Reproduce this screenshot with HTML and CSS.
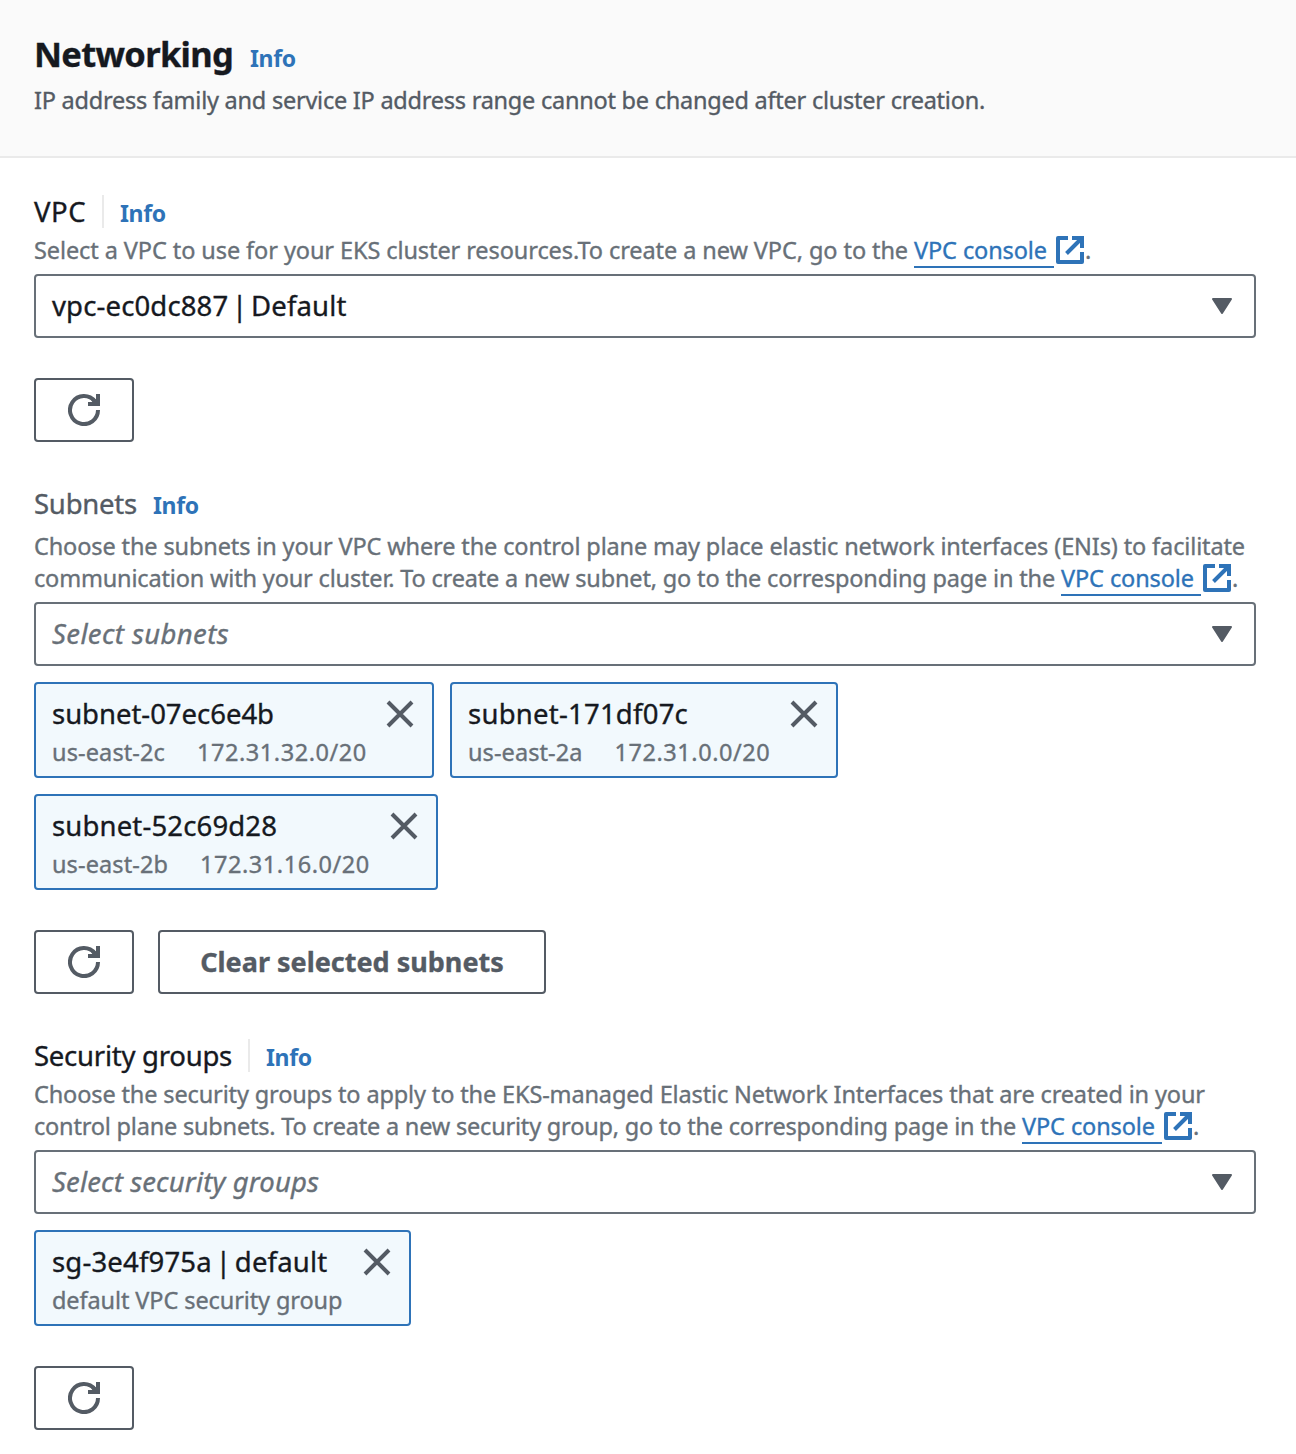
FILE: index.html
```html
<!DOCTYPE html>
<html lang="en">
<head>
<meta charset="utf-8">
<title>Networking</title>
<link rel="stylesheet" href="styles.css">
</head>
<body>
<svg class="sprite" aria-hidden="true">
  <symbol id="refresh" viewBox="0 0 32 32"><path d="M30 16A14 14 0 1 1 27 7.4"/><path d="M30 0V10H20M24.5 5L29 9.5"/></symbol>
  <symbol id="external" viewBox="0 0 28 28"><path stroke-linejoin="round" d="M12 2H2V26H26V16"/><path d="M16 2H26V12M25 3L10.5 17.5"/></symbol>
  <symbol id="close" viewBox="0 0 28 28"><path d="M2 2L26 26M26 2L2 26"/></symbol>
  <symbol id="caret" viewBox="0 0 20 16"><path d="M1 1H19L10 15Z"/></symbol>
</svg>
<header class="panel-header">
  <div class="title-row"><h2 class="title">Networking</h2><a class="info">Info</a></div>
  <p class="subtitle">IP address family and service IP address range cannot be changed after cluster creation.</p>
</header>
<main class="panel-body">
  <section class="field vpc">
    <div class="label-row"><h3 class="label divided">VPC</h3><a class="info">Info</a></div>
    <div class="hint"><div class="line"><span class="first">Select a VPC to use for your EKS cluster resources.To create a new VPC, go to the</span><a class="link">VPC console</a><svg class="external"><use href="#external"/></svg>.</div></div>
    <div class="select"><span class="value">vpc-ec0dc887 | Default</span><svg class="caret"><use href="#caret"/></svg></div>
    <div class="actions"><button class="button icon-only" aria-label="Refresh"><svg class="refresh"><use href="#refresh"/></svg></button></div>
  </section>
  <section class="field subnets">
    <div class="label-row"><h3 class="label muted">Subnets</h3><a class="info">Info</a></div>
    <div class="hint"><div class="line"><span class="first">Choose the subnets in your VPC where the control plane may place elastic network interfaces (ENIs) to facilitate</span></div><div class="line"><span class="second">communication with your cluster. To create a new subnet, go to the corresponding page in the</span><a class="link">VPC console</a><svg class="external"><use href="#external"/></svg>.</div></div>
    <div class="select placeholder"><span class="value">Select subnets</span><svg class="caret"><use href="#caret"/></svg></div>
    <div class="tokens">
      <div class="token zone-c"><div class="name">subnet-07ec6e4b</div><div class="meta"><span class="zone">us-east-2c</span><span class="cidr">172.31.32.0/20</span></div><svg class="close"><use href="#close"/></svg></div>
      <div class="token zone-a"><div class="name">subnet-171df07c</div><div class="meta"><span class="zone">us-east-2a</span><span class="cidr">172.31.0.0/20</span></div><svg class="close"><use href="#close"/></svg></div>
      <div class="token zone-b"><div class="name">subnet-52c69d28</div><div class="meta"><span class="zone">us-east-2b</span><span class="cidr">172.31.16.0/20</span></div><svg class="close"><use href="#close"/></svg></div>
    </div>
    <div class="actions"><button class="button icon-only" aria-label="Refresh"><svg class="refresh"><use href="#refresh"/></svg></button><button class="button clear">Clear selected subnets</button></div>
  </section>
  <section class="field groups">
    <div class="label-row"><h3 class="label divided">Security groups</h3><a class="info">Info</a></div>
    <div class="hint"><div class="line"><span class="first">Choose the security groups to apply to the EKS-managed Elastic Network Interfaces that are created in your</span></div><div class="line"><span class="second">control plane subnets. To create a new security group, go to the corresponding page in the</span><a class="link">VPC console</a><svg class="external"><use href="#external"/></svg>.</div></div>
    <div class="select placeholder"><span class="value">Select security groups</span><svg class="caret"><use href="#caret"/></svg></div>
    <div class="tokens">
      <div class="token group"><div class="name">sg-3e4f975a | default</div><div class="meta">default VPC security group</div><svg class="close"><use href="#close"/></svg></div>
    </div>
    <div class="actions"><button class="button icon-only" aria-label="Refresh"><svg class="refresh"><use href="#refresh"/></svg></button></div>
  </section>
</main>
</body>
</html>
```
FILE: styles.css
```css
* { box-sizing: border-box; }
body { margin: 0; background: #fff; color: #16191f; font: 23.5px/32px "Noto Sans", "Open Sans", sans-serif; -webkit-text-stroke: 0.35px; }
h2, h3, p { margin: 0; font-weight: 400; }
svg { display: block; flex: none; fill: none; stroke: #545b64; stroke-width: 4; }
.sprite { position: absolute; width: 0; height: 0; }

.panel-header { height: 158px; padding: 30px 34px 0; background: #fafafa; border-bottom: 2px solid #eaeaea; }
.title-row { display: flex; height: 45px; gap: 17px; align-items: baseline; }
.title { width: 199px; font-size: 34.5px; line-height: 47px; font-weight: 700; letter-spacing: -0.7px; white-space: nowrap; }
.subtitle { margin-top: 10px; color: #545b64; line-height: 30px; letter-spacing: -0.242px; white-space: nowrap; }
.info { color: #2e73b8; font-size: 23px; font-weight: 700; letter-spacing: -0.35px; -webkit-text-stroke: 0; }

.panel-body { display: flex; flex-direction: column; padding: 37px 40px 24px 34px; }
.field + .field { margin-top: 45px; }
.label-row { display: flex; height: 33px; gap: 16px; align-items: baseline; line-height: 33px; }
.label { font-size: 27.5px; line-height: 33px; white-space: nowrap; }
.divided { padding-right: 16px; border-right: 2px solid #eaeaea; }
.muted { color: #545b64; }
.vpc .label { width: 70px; letter-spacing: 0.5px; }
.subnets .label-row { height: 34px; }
.subnets .label { width: 103px; letter-spacing: -0.23px; }
.groups .label { width: 216px; letter-spacing: -0.25px; }

.hint { margin: 7px 0; color: #687078; }
.subnets .hint { margin-top: 10px; }
.line { display: flex; height: 32px; line-height: 30px; white-space: nowrap; }
.vpc .first { width: 874px; letter-spacing: -0.088px; }
.subnets .first { letter-spacing: -0.127px; }
.subnets .second { width: 1021px; letter-spacing: -0.169px; }
.groups .first { letter-spacing: -0.137px; }
.groups .second { width: 982px; letter-spacing: -0.196px; }
.link { width: 140px; height: 33px; margin-left: 6px; color: #2e73b8; letter-spacing: -0.1px; border-bottom: 2px solid #2e73b8; }
.external { width: 28px; height: 28px; margin: 1px 1px 0 2px; stroke: #2e73b8; }

.select { display: flex; align-items: center; justify-content: space-between; height: 64px; padding: 0 22px 0 16px; border: 2px solid #687078; border-radius: 4px; font-size: 27.5px; }
.vpc .value { letter-spacing: 0.14px; word-spacing: -3.6px; }
.subnets .value { letter-spacing: 0.39px; }
.groups .value { letter-spacing: 0.15px; }
.placeholder { color: #687078; font-style: italic; }
.caret { width: 20px; height: 16px; fill: #545b64; stroke-width: 2; stroke-linejoin: round; }

.actions { display: flex; gap: 24px; margin-top: 40px; }
.button { display: flex; align-items: center; justify-content: center; height: 64px; padding: 0; border: 2px solid #545b64; border-radius: 4px; background: #fff; color: #545b64; font: 700 27px/32px "Noto Sans", sans-serif; }
.icon-only { width: 100px; }
.refresh { width: 32px; height: 32px; }
.clear { width: 388px; }

.tokens { display: flex; flex-wrap: wrap; gap: 16px; margin-top: 16px; }
.token { position: relative; height: 96px; padding: 14px 16px; border: 2px solid #2e73b8; border-radius: 4px; background: #f2f9fd; }
.name { height: 32px; font-size: 27.5px; line-height: 32px; white-space: nowrap; }
.meta { display: flex; gap: 32px; margin-top: 6px; color: #687078; white-space: nowrap; }
.close { position: absolute; top: 16px; right: 18px; width: 28px; height: 28px; }
.cidr { letter-spacing: 0.55px; }
.zone-c { width: 400px; }
.zone-c .name { letter-spacing: -0.03px; }
.zone-c .zone { letter-spacing: 0.12px; }
.zone-a { width: 388px; }
.zone-a .name { letter-spacing: 0.23px; }
.zone-a .zone { letter-spacing: 0.08px; }
.zone-b { width: 404px; }
.zone-b .name { letter-spacing: 0.15px; }
.zone-b .zone { letter-spacing: 0.1px; }
.group { width: 377px; }
.group .name { letter-spacing: 0.17px; word-spacing: -3.5px; }
.group .meta { letter-spacing: -0.1px; }
```
